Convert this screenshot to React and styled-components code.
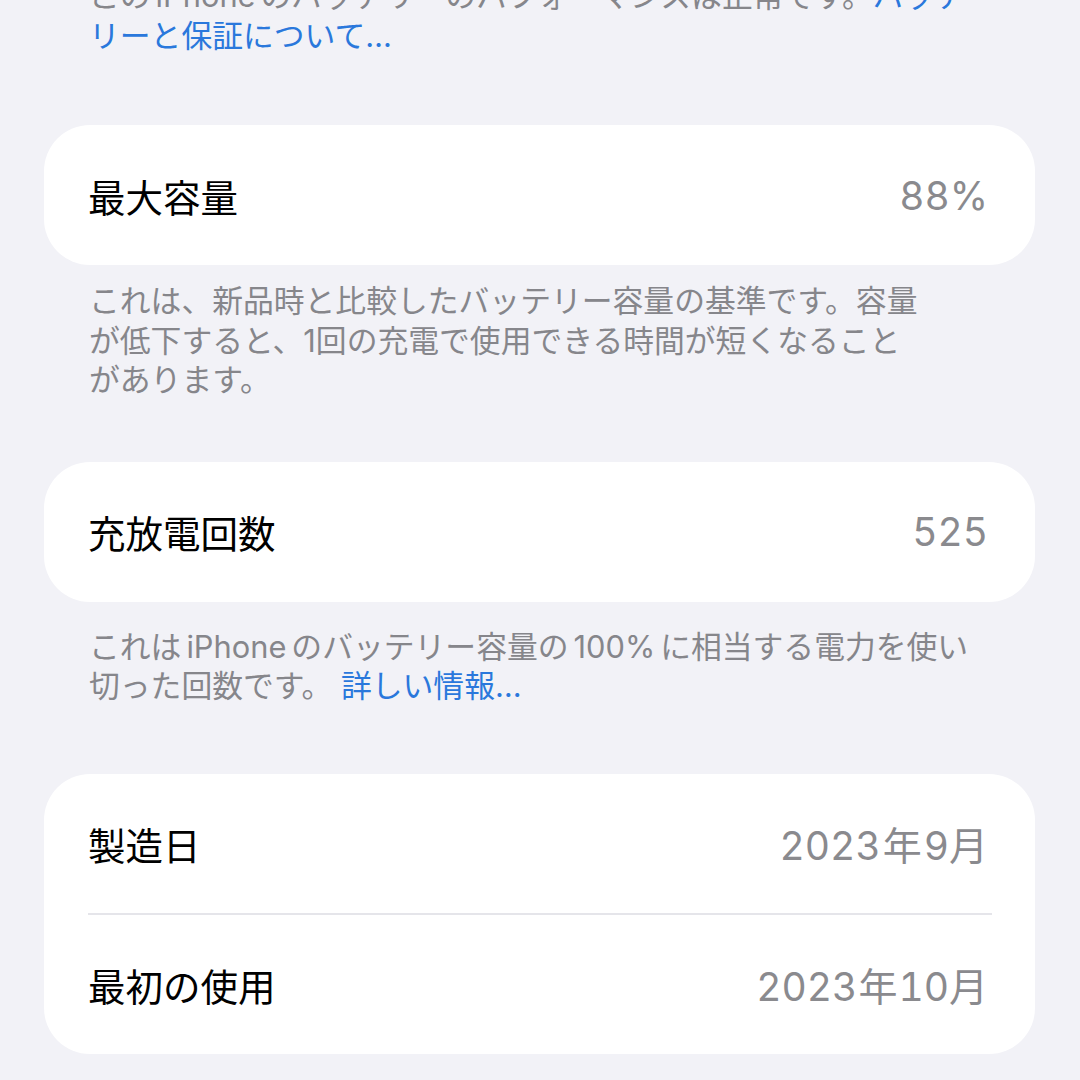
import React from "react";
import styled, { createGlobalStyle } from "styled-components";

const Global = createGlobalStyle`
  html, body {
    margin: 0;
    padding: 0;
    background: #f2f2f7;
    overflow: hidden;
  }
  body {
    font-family: "Inter", "Noto Sans CJK JP", sans-serif;
    -webkit-font-smoothing: antialiased;
  }
`;

const Page = styled.div`
  width: 1080px;
  height: 1080px;
  box-sizing: border-box;
  padding: 0 45px 0 44px;
  display: flex;
  flex-direction: column;
  overflow: hidden;
  background: #f2f2f7;
`;

const Footer = styled.p`
  margin: ${(p) => p.$top}px 0 ${(p) => p.$bottom}px 0;
  padding: 0 0 0 45px;
  font-size: 30.8px;
  line-height: 39.5px;
  color: #86868b;
  white-space: nowrap;
  font-family: "Inter", "Noto Sans CJK JP", sans-serif;
`;

const Link = styled.span`
  color: #2a78dc;
`;

const Latin = styled.span`
  margin: 0 ${(p) => p.$gap ?? 4}px;
`;

const Card = styled.div`
  background: #ffffff;
  border-radius: 46px;
  display: flex;
  flex-direction: column;
  flex-shrink: 0;
`;

const Row = styled.div`
  height: ${(p) => p.$h}px;
  display: flex;
  align-items: center;
  justify-content: space-between;
  padding: 0 47px 0 44px;
`;

const Label = styled.span`
  font-size: 37.5px;
  color: #000000;
  font-family: "Inter", "Noto Sans CJK JP", sans-serif;
`;

const Value = styled.span`
  font-size: 39px;
  letter-spacing: 0;
  color: #8a8a8e;
  font-variant-numeric: tabular-nums;
  font-family: "Inter", "Noto Sans CJK JP", sans-serif;
`;

const Separator = styled.div`
  height: 2px;
  margin: 0 43px 0 44px;
  background: #e5e5ea;
`;

export default function App() {
  return (
    <>
      <Global />
      <Page>
        <Footer $top={-24} $bottom={70}>
          この<Latin $gap={5}>iPhone</Latin>のバッテリーのパフォーマンスは正常です。
          <Link>バッテ</Link>
          <br />
          <Link>リーと保証について…</Link>
        </Footer>

        <Card>
          <Row $h={140}>
            <Label>最大容量</Label>
            <Value>88%</Value>
          </Row>
        </Card>
        <Footer $top={16} $bottom={62}>
          これは、新品時と比較したバッテリー容量の基準です。容量
          <br />
          が低下すると、1回の充電で使用できる時間が短くなること
          <br />
          があります。
        </Footer>

        <Card>
          <Row $h={140}>
            <Label>充放電回数</Label>
            <Value>525</Value>
          </Row>
        </Card>
        <Footer $top={25} $bottom={68}>
          これは<Latin $gap={5}>iPhone</Latin>のバッテリー容量の<Latin $gap={5}>100%</Latin>に相当する電力を使い
          <br />
          切った回数です。 <Link>詳しい情報…</Link>
        </Footer>

        <Card>
          <Row $h={139}>
            <Label>製造日</Label>
            <Value>2023<Latin $gap={2}>年</Latin>9月</Value>
          </Row>
          <Separator />
          <Row $h={139}>
            <Label>最初の使用</Label>
            <Value>2023<Latin $gap={1}>年</Latin>10月</Value>
          </Row>
        </Card>
      </Page>
    </>
  );
}
